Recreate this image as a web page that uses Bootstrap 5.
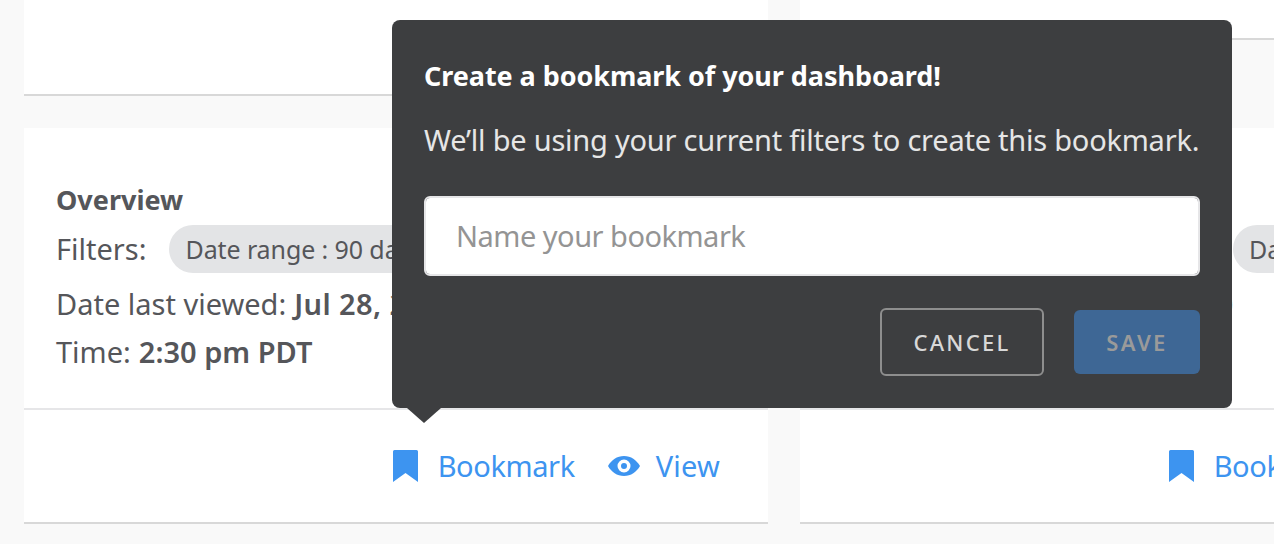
<!DOCTYPE html>
<html lang="en"><head><meta charset="utf-8"><title>Bookmarks</title>
<link href="https://cdn.jsdelivr.net/npm/bootstrap@5.3.0/dist/css/bootstrap.min.css" rel="stylesheet">
<style>
html,body{height:544px;overflow:hidden}
body{background:#f9f9f9;color:#55565a;font-family:"Noto Sans","Liberation Sans",sans-serif;font-size:29px;line-height:48px;position:relative}
.board{display:grid;grid-template-columns:744px 744px;grid-template-rows:96px 396px;gap:32px;padding-left:24px;width:1600px}
.tile{background:#fff;border-bottom:2px solid #d8d8d8}
.tile-short{height:40px}
.tile-main{display:flex;flex-direction:column}
.tile-body{height:282px;padding:48px 32px 0;border-bottom:2px solid #e6e6e8;white-space:nowrap}
.tile-title{font-size:27px;font-weight:700;line-height:48px;margin-bottom:1px}
.tile-line{line-height:48px;display:flex;align-items:center}
.tile-line b{font-weight:600;margin-left:8px}
.tile-date b{letter-spacing:.4px}
.tile-pills{margin-bottom:7px}
.pill{background:#e3e4e6;border-radius:24px;font-size:25px;letter-spacing:-.1px;line-height:48px;height:48px;padding:0 16px;margin-left:23px}
.pill+.pill{margin-left:18px}
.tile-foot{flex:1;display:flex;justify-content:flex-end;align-items:center;gap:33px;padding-right:48px}
.act{color:#3d94f0;font-size:29px;letter-spacing:-.4px;display:flex;align-items:center;gap:20px;text-decoration:none}
.act-view{gap:16px;letter-spacing:.2px}
.act svg{fill:#3d94f0;flex:none}
.pop{position:absolute;left:392px;top:20px;width:840px;height:388px;background:#3d3e40;border-radius:8px;padding:32px;color:#e6e6e6}
.pop::after{content:"";position:absolute;left:15px;top:388px;border:17px solid transparent;border-top:15px solid #3d3e40;border-bottom:0}
.pop-title{color:#fff;font-size:27px;font-weight:700;line-height:48px;letter-spacing:-.06px}
.pop-text{font-size:29px;line-height:48px;margin:16px 0 32px;white-space:nowrap;letter-spacing:-.23px}
.pop input.form-control{height:80px;font-size:29px;border:2px solid #e6e6e8;border-radius:6px;padding:0 30px 2px;color:#333;letter-spacing:-.5px}
.pop input.form-control::placeholder{color:#949494}
.btn-cancel,.btn-save{font-size:22px;font-weight:500;letter-spacing:2.3px;border-radius:6px;line-height:1;padding:0}
.btn-cancel{width:164px;height:68px;background:transparent;border:2px solid #8e8e8e;color:#d8d8d8}
.btn-save,.btn-save:disabled{font-weight:600;width:126px;height:64px;background:#3e6795;border:0;color:#9a9a9a;opacity:1}
.pop-actions{gap:30px;margin-top:32px}
</style></head><body>
<div class="board">
  <div class="tile"></div>
  <div class="tile tile-short"></div>
  <div class="tile tile-main">
    <div class="tile-body">
      <div class="tile-title">Overview</div>
      <div class="tile-line tile-pills">Filters:<span class="pill">Date range : 90 days</span></div>
      <div class="tile-line tile-date">Date last viewed:<b>Jul 28, 2020</b></div>
      <div class="tile-line">Time:<b>2:30 pm PDT</b></div>
    </div>
    <div class="tile-foot">
      <a class="act" href="#"><svg width="25" height="32" viewBox="0 0 25 32"><path d="M1.500 0H23.500A1.500 1.500 0 0 1 25 1.500V32L12.500 23 0 32V1.500A1.500 1.500 0 0 1 1.500 0Z"/></svg>Bookmark</a>
      <a class="act act-view" href="#"><svg width="32" height="20" viewBox="0 0 32 20"><path fill-rule="evenodd" d="M16 0C9 0 3.500 4 0 10c3.500 6 9 10 16 10s12.500-4 16-10C28.500 4 23 0 16 0Zm0 3.500a6.500 6.500 0 1 1 0 13 6.500 6.500 0 0 1 0-13Zm0 3.500a3 3 0 1 0 0 6 3 3 0 0 0 0-6Z"/></svg>View</a>
    </div>
  </div>
  <div class="tile tile-main">
    <div class="tile-body">
      <div class="tile-title">Overview</div>
      <div class="tile-line tile-pills">Filters:<span class="pill">Date range : 90 days</span><span class="pill">Date range : 90 days</span></div>
      <div class="tile-line tile-date">Date last viewed:<b>Jul 28, 2020</b></div>
      <div class="tile-line">Time:<b>2:30 pm PDT</b></div>
    </div>
    <div class="tile-foot">
      <a class="act" href="#"><svg width="25" height="32" viewBox="0 0 25 32"><path d="M1.500 0H23.500A1.500 1.500 0 0 1 25 1.500V32L12.500 23 0 32V1.500A1.500 1.500 0 0 1 1.500 0Z"/></svg>Bookmark</a>
      <a class="act act-view" href="#"><svg width="32" height="20" viewBox="0 0 32 20"><path fill-rule="evenodd" d="M16 0C9 0 3.500 4 0 10c3.500 6 9 10 16 10s12.500-4 16-10C28.500 4 23 0 16 0Zm0 3.500a6.500 6.500 0 1 1 0 13 6.500 6.500 0 0 1 0-13Zm0 3.500a3 3 0 1 0 0 6 3 3 0 0 0 0-6Z"/></svg>View</a>
    </div>
  </div>
</div>
<div class="pop">
  <div class="pop-title">Create a bookmark of your dashboard!</div>
  <div class="pop-text">We’ll be using your current filters to create this bookmark.</div>
  <input class="form-control" type="text" placeholder="Name your bookmark">
  <div class="d-flex justify-content-end align-items-center pop-actions">
    <button class="btn btn-cancel" type="button">CANCEL</button>
    <button class="btn btn-save" type="button" disabled>SAVE</button>
  </div>
</div>
</body></html>
